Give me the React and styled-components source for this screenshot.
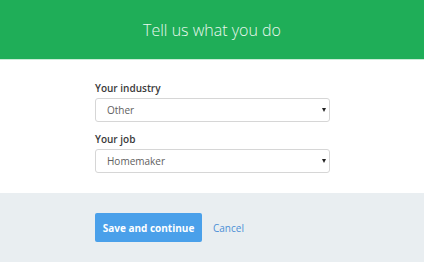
import React from "react";
import styled, { createGlobalStyle } from "styled-components";

const Global = createGlobalStyle`
  html, body {
    margin: 0;
    padding: 0;
    background: #e9eef1;
  }
  body {
    font-family: "Open Sans", "Liberation Sans", sans-serif;
  }
`;

const Page = styled.div`
  width: 424px;
  height: 262px;
  display: flex;
  flex-direction: column;
`;

const Header = styled.div`
  height: 60px;
  background: #1fae58;
  border-bottom: 1px solid #c9ecd6;
  display: flex;
  align-items: center;
  justify-content: center;
  box-sizing: border-box;
`;

const Title = styled.h1`
  margin: 0;
  font-size: 16px;
  font-weight: 300;
  color: #e8f7ee;
`;

const Body = styled.div`
  background: #fff;
  height: 133px;
  padding: 21px 94px 0 95px;
  box-sizing: border-box;
  display: flex;
  flex-direction: column;
`;

const Label = styled.label`
  font-size: 10px;
  line-height: 14px;
  font-weight: 600;
  color: #3a3a3a;
  margin-bottom: 3px;
  margin-top: ${(p) => (p.$first ? "0" : "10px")};
`;

const Select = styled.div`
  height: 24px;
  border: 1px solid #d6d6d6;
  border-radius: 3px;
  display: flex;
  align-items: center;
  justify-content: space-between;
  padding: 0 3px 0 11px;
  box-sizing: border-box;
  font-size: 10px;
  color: #606060;
`;

const Arrow = styled.span`
  width: 0;
  height: 0;
  border-left: 2.5px solid transparent;
  border-right: 2.5px solid transparent;
  border-top: 4px solid #222;
`;

const Footer = styled.div`
  flex: 1;
  background: #e9eef1;
  display: flex;
  align-items: center;
  padding: 0 0 0 95px;
  gap: 11px;
`;

const Button = styled.button`
  height: 29px;
  width: 107px;
  border: none;
  border-radius: 2px;
  background: #4aa0ea;
  color: #fff;
  font-family: inherit;
  font-size: 10px;
  font-weight: 700;
  padding: 0;
`;

const Cancel = styled.a`
  font-size: 10px;
  color: #4b8fd6;
`;

const Field = ({ label, value, first }) => (
  <>
    <Label $first={first}>{label}</Label>
    <Select>
      {value}
      <Arrow />
    </Select>
  </>
);

export default function App() {
  return (
    <Page>
      <Global />
      <Header>
        <Title>Tell us what you do</Title>
      </Header>
      <Body>
        <Field first label="Your industry" value="Other" />
        <Field label="Your job" value="Homemaker" />
      </Body>
      <Footer>
        <Button>Save and continue</Button>
        <Cancel>Cancel</Cancel>
      </Footer>
    </Page>
  );
}
